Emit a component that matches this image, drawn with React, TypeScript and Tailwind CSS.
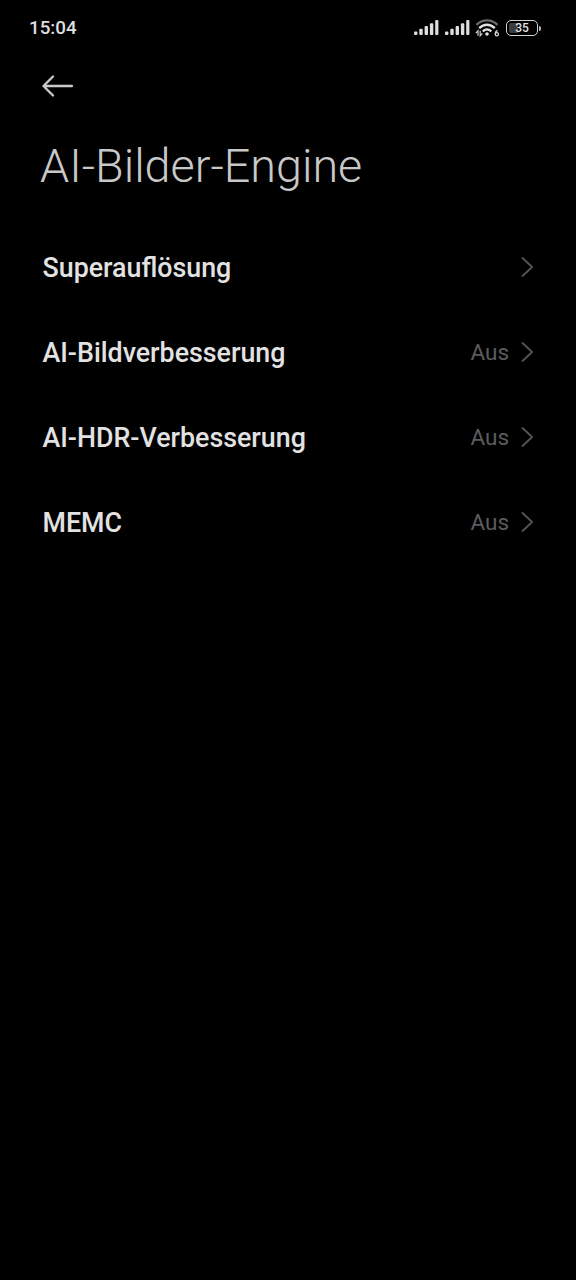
const rows = [
  { label: 'Superauflösung', value: '' },
  { label: 'AI-Bildverbesserung', value: 'Aus' },
  { label: 'AI-HDR-Verbesserung', value: 'Aus' },
  { label: 'MEMC', value: 'Aus' },
];

function Signal() {
  return (
    <svg width="25" height="16" viewBox="0 0 25 16" fill="#dedede">
      <rect x="0" y="11.6" width="3.4" height="3.4" rx="1" />
      <rect x="5.3" y="8.8" width="3.4" height="6.2" rx="1" />
      <rect x="10.6" y="6" width="3.4" height="9" rx="1" />
      <rect x="15.9" y="3.3" width="3.4" height="11.7" rx="1" />
      <rect x="21.2" y="0" width="3.2" height="15" rx="1" />
    </svg>
  );
}

function Wifi() {
  return (
    <svg width="26" height="20" viewBox="0 0 26 20" fill="none" strokeLinecap="butt">
      <path d="M1.5 6.8C7.5.9 16.5.9 22.5 6.8" stroke="#6c6c6c" strokeWidth="2.4" />
      <path d="M4.2 10.2C8.8 5.6 15.2 5.6 19.8 10.2" stroke="#e2e2e2" strokeWidth="2.4" />
      <path d="M7.7 13.4c2.6-2.4 6-2.4 8.6 0" stroke="#e2e2e2" strokeWidth="2.2" />
      <circle cx="12" cy="16" r="1.8" fill="#e2e2e2" />
      <path d="M3 17.8v-5L.8 15.2M5.2 12.8v5l2.2-2.4" stroke="#d0d0d0" strokeWidth="1.2" />
      <path d="M22.4 12.4c-1.4.8-2.2 2-2.2 3.6" stroke="#d8d8d8" strokeWidth="1.3" />
      <circle cx="21.8" cy="16.2" r="1.6" stroke="#d8d8d8" strokeWidth="1.3" />
    </svg>
  );
}

function Battery() {
  return (
    <div className="flex items-center">
      <div className="relative flex h-4 w-8 items-center justify-center rounded-[5px] border-[1.5px] border-[#d2d2d2]">
        <div className="absolute inset-y-[2px] left-[2px] w-[9px] rounded-l-[2px] bg-[#3c3c3c]" />
        <span className="relative text-[12px] leading-none font-medium text-[#e4e4e4]">35</span>
      </div>
      <div className="ml-px h-[5px] w-[2px] rounded-r-full bg-[#bcbcbc]" />
    </div>
  );
}

function Chevron() {
  return (
    <svg className="mb-px" width="14" height="22" viewBox="0 0 14 22" fill="none" stroke="#545454" strokeWidth="1.8" strokeLinecap="round" strokeLinejoin="round">
      <path d="M2.5 2l9.6 9-9.6 9" />
    </svg>
  );
}

export default function App() {
  return (
    <div className="flex h-[1280px] w-[576px] flex-col bg-black font-['Roboto',sans-serif] antialiased">
      <header className="flex h-14 items-center justify-between pr-[35px] pl-[29px]">
        <span className="text-[18.8px] leading-6 font-medium text-[#dedede]">15:04</span>
        <div className="flex items-center">
          <Signal />
          <div className="ml-[5.5px]">
            <Signal />
          </div>
          <div className="ml-[5px]">
            <Wifi />
          </div>
          <div className="ml-[5.5px]">
            <Battery />
          </div>
        </div>
      </header>
      <nav className="flex h-[60px] items-center pl-[42px]">
        <button aria-label="Zurück">
          <svg width="32" height="22" viewBox="0 0 32 22" fill="none" stroke="#cacaca" strokeWidth="2.3" strokeLinecap="round" strokeLinejoin="round">
            <path d="M11 1.5L1.5 11l9.5 9.5M1.5 11H30" />
          </svg>
        </button>
      </nav>
      <h1 className="mt-5 pl-10 text-[46.7px] leading-[60px] font-light whitespace-nowrap text-[#c8c8c8]">
        AI-Bilder-Engine
      </h1>
      <main className="mt-[29px] flex flex-col">
        {rows.map((row) => (
          <div key={row.label} className="flex h-[85px] items-center pr-[42px] pl-[42.5px]">
            <span className="flex-1 text-[26.8px] leading-8 font-medium text-[#e2e2e2]">{row.label}</span>
            {row.value && (
              <span className="mr-[11px] mb-px text-[22.5px] leading-8 text-[#5c5c5c]">{row.value}</span>
            )}
            <Chevron />
          </div>
        ))}
      </main>
    </div>
  );
}
